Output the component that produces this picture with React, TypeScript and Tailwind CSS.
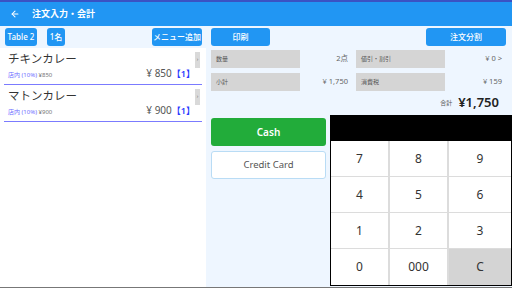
import { ArrowLeft } from "lucide-react"

const items = [
  { name: "チキンカレー", price: "¥850", qty: 1 },
  { name: "マトンカレー", price: "¥900", qty: 1 },
]

const summary = [
  [
    { label: "数量", value: "2点" },
    { label: "値引・割引", value: "¥0 >" },
  ],
  [
    { label: "小計", value: "¥1,750" },
    { label: "消費税", value: "¥159" },
  ],
]

const keys = ["7", "8", "9", "4", "5", "6", "1", "2", "3", "0", "000", "C"]

function BlueButton({ label, className = "" }: { label: string; className?: string }) {
  return (
    <button
      className={`h-[18px] rounded-[3px] bg-[#2196f3] text-white text-[8px] font-medium whitespace-nowrap flex items-center justify-center ${className}`}
    >
      {label}
    </button>
  )
}

export default function App() {
  return (
    <div
      className="w-[512px] h-[288px] overflow-hidden flex flex-col bg-[#eef6ff] border-b border-[#777]"
      style={{ fontFamily: '"Noto Sans", "Noto Sans CJK JP", sans-serif' }}
    >
      <header className="h-[26px] shrink-0 bg-[#2196f3] border-t-2 border-[#3a52c4] flex items-center text-white">
        <ArrowLeft size={10} strokeWidth={2.5} className="ml-[10px]" />
        <span className="ml-[12px] text-[9px] font-semibold">注文入力・会計</span>
      </header>

      <div className="flex flex-1 min-h-0">
        <section className="w-[206px] flex flex-col">
          <div className="h-[22px] flex items-center px-[5px] gap-[10px]">
            <BlueButton label="Table 2" className="w-[32px]" />
            <BlueButton label="1名" className="w-[18px]" />
            <BlueButton label="メニュー追加" className="w-[50px] ml-auto mr-[-1px]" />
          </div>
          <div className="flex-1 bg-white">
            {items.map((item) => (
              <div key={item.name} className="h-[37px] mx-[4px] border-b border-[#7b7bff] relative">
                <div className="pl-[4px] pt-[3px] text-[11.5px] leading-[16px] text-[#333]">{item.name}</div>
                <div className="flex items-end justify-between pl-[4px] pr-[7px]">
                  <span className="text-[6px] text-[#777]">
                    <span className="text-[#6d6dff]">店内 (10%)</span> {item.price}
                  </span>
                  <span className="text-[10px] text-[#555] leading-[12px] whitespace-nowrap">
                    {item.price.replace("¥", "¥ ")}
                    <span className="text-[#2a3bff] text-[9px] font-semibold">【{item.qty}】</span>
                  </span>
                </div>
                <div className="absolute right-[2px] top-[4px] w-[5px] h-[16px] bg-[#d9d9d9] text-[5px] text-[#666] flex items-center justify-center">
                  ›
                </div>
              </div>
            ))}
          </div>
        </section>

        <section className="flex-1 pl-[5px] flex flex-col">
          <div className="h-[22px] flex items-center justify-between pr-[6px]">
            <BlueButton label="印刷" className="w-[59px]" />
            <BlueButton label="注文分割" className="w-[80px]" />
          </div>
          <div className="flex flex-col gap-[5px] pt-[2px]">
            {summary.map((row, i) => (
              <div key={i} className="flex h-[18px] gap-[8px]">
                {row.map((cell, j) => (
                  <div key={cell.label} className={`flex items-center ${j === 0 ? "w-[137px]" : "w-[146px]"}`}>
                    <div className="w-[89px] h-full bg-[#d5d5d5] text-[6px] text-[#555] flex items-center pl-[5px]">
                      {cell.label}
                    </div>
                    <span className="flex-1 text-right text-[7.5px] text-[#666]">{cell.value.replace("¥", "¥ ")}</span>
                  </div>
                ))}
              </div>
            ))}
          </div>
          <div className="h-[24px] flex items-center justify-end pr-[13px] gap-[6px]">
            <span className="text-[6px] text-[#555]">合計</span>
            <span className="text-[13px] font-semibold text-[#222]">¥1,750</span>
          </div>

          <div className="flex flex-1 min-h-0 gap-[4px]">
            <div className="w-[115px] flex flex-col gap-[5px] pt-[3px]">
              <button className="h-[28px] rounded-[3px] bg-[#22ac3a] text-white text-[10px] font-semibold">Cash</button>
              <button className="h-[28px] rounded-[3px] bg-white border border-[#b9dcf5] text-[#555] text-[9.5px]">
                Credit Card
              </button>
            </div>
            <div className="flex-1 border border-black flex flex-col mb-[1px]">
              <div className="h-[25px] bg-black" />
              <div className="flex-1 grid grid-cols-[59px_59px_1fr] grid-rows-4 bg-white">
                {keys.map((k, i) => (
                  <div
                    key={k}
                    className={`flex items-center justify-center text-[12px] text-[#333] border-[#dcdcdc] ${
                      i % 3 < 2 ? "border-r-2" : ""
                    } ${i < 9 ? "border-b" : ""} ${k === "C" ? "bg-[#d4d4d4]" : ""}`}
                  >
                    {k}
                  </div>
                ))}
              </div>
            </div>
          </div>
        </section>
      </div>
    </div>
  )
}
